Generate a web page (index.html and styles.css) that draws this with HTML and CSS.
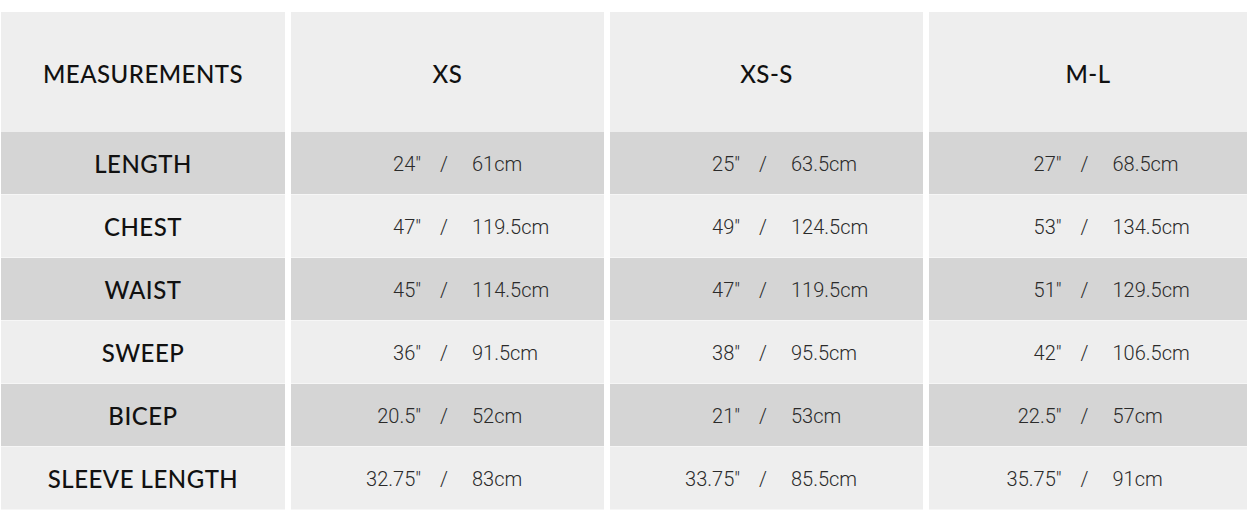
FILE: index.html
```html
<!DOCTYPE html>
<html lang="en">
<head>
<meta charset="utf-8">
<title>Size chart</title>
<link rel="stylesheet" href="styles.css">
</head>
<body>
<div class="chart">
  <div class="cell head label">MEASUREMENTS</div>
  <div class="cell head size">XS</div>
  <div class="cell head size">XS-S</div>
  <div class="cell head size">M-L</div>

  <div class="cell dark label">LENGTH</div>
  <div class="cell dark val"><span class="in">24″</span><span class="sl">/</span><span class="cm">61cm</span></div>
  <div class="cell dark val"><span class="in">25″</span><span class="sl">/</span><span class="cm">63.5cm</span></div>
  <div class="cell dark val"><span class="in">27″</span><span class="sl">/</span><span class="cm">68.5cm</span></div>

  <div class="cell light label">CHEST</div>
  <div class="cell light val"><span class="in">47″</span><span class="sl">/</span><span class="cm">119.5cm</span></div>
  <div class="cell light val"><span class="in">49″</span><span class="sl">/</span><span class="cm">124.5cm</span></div>
  <div class="cell light val"><span class="in">53″</span><span class="sl">/</span><span class="cm">134.5cm</span></div>

  <div class="cell dark label">WAIST</div>
  <div class="cell dark val"><span class="in">45″</span><span class="sl">/</span><span class="cm">114.5cm</span></div>
  <div class="cell dark val"><span class="in">47″</span><span class="sl">/</span><span class="cm">119.5cm</span></div>
  <div class="cell dark val"><span class="in">51″</span><span class="sl">/</span><span class="cm">129.5cm</span></div>

  <div class="cell light label">SWEEP</div>
  <div class="cell light val"><span class="in">36″</span><span class="sl">/</span><span class="cm">91.5cm</span></div>
  <div class="cell light val"><span class="in">38″</span><span class="sl">/</span><span class="cm">95.5cm</span></div>
  <div class="cell light val"><span class="in">42″</span><span class="sl">/</span><span class="cm">106.5cm</span></div>

  <div class="cell dark label">BICEP</div>
  <div class="cell dark val"><span class="in">20.5″</span><span class="sl">/</span><span class="cm">52cm</span></div>
  <div class="cell dark val"><span class="in">21″</span><span class="sl">/</span><span class="cm">53cm</span></div>
  <div class="cell dark val"><span class="in">22.5″</span><span class="sl">/</span><span class="cm">57cm</span></div>

  <div class="cell light label">SLEEVE LENGTH</div>
  <div class="cell light val"><span class="in">32.75″</span><span class="sl">/</span><span class="cm">83cm</span></div>
  <div class="cell light val"><span class="in">33.75″</span><span class="sl">/</span><span class="cm">85.5cm</span></div>
  <div class="cell light val"><span class="in">35.75″</span><span class="sl">/</span><span class="cm">91cm</span></div>
</div>
</body>
</html>
```

FILE: styles.css
```css
* { box-sizing: border-box; }
html, body { margin: 0; padding: 0; background: #ffffff; }
body { padding: 12px 0 0 1px; overflow: hidden; }

.chart {
  display: grid;
  grid-template-columns: 284px 313px 313px 318px;
  grid-template-rows: 120px repeat(6, 63px);
  column-gap: 6px;
  width: 1246px;
}

.cell {
  display: flex;
  align-items: center;
  justify-content: center;
  color: #111;
}

.head { background: #eeeeee; padding-top: 3px; }
.dark { background: #d5d5d5; border-bottom: 1px solid #f6f6f6; }
.light { background: #eeeeee; border-bottom: 1px solid #f6f6f6; }

.label, .size {
  font-family: "Lato", "DejaVu Sans", sans-serif;
  font-weight: 500;
  font-size: 24px;
  letter-spacing: 0.5px;
  color: #111;
}

.val {
  display: grid;
  grid-template-columns: 1fr auto 1fr;
  align-items: center;
  font-family: "Roboto", "Liberation Sans", sans-serif;
  font-weight: 300;
  font-size: 20px;
  color: #2a2a2a;
  padding: 2px 2px 0 0;
}
.val .in { justify-self: end; }
.val .sl { margin: 0 24px 0 19px; }
.val .cm { justify-self: start; }
```
